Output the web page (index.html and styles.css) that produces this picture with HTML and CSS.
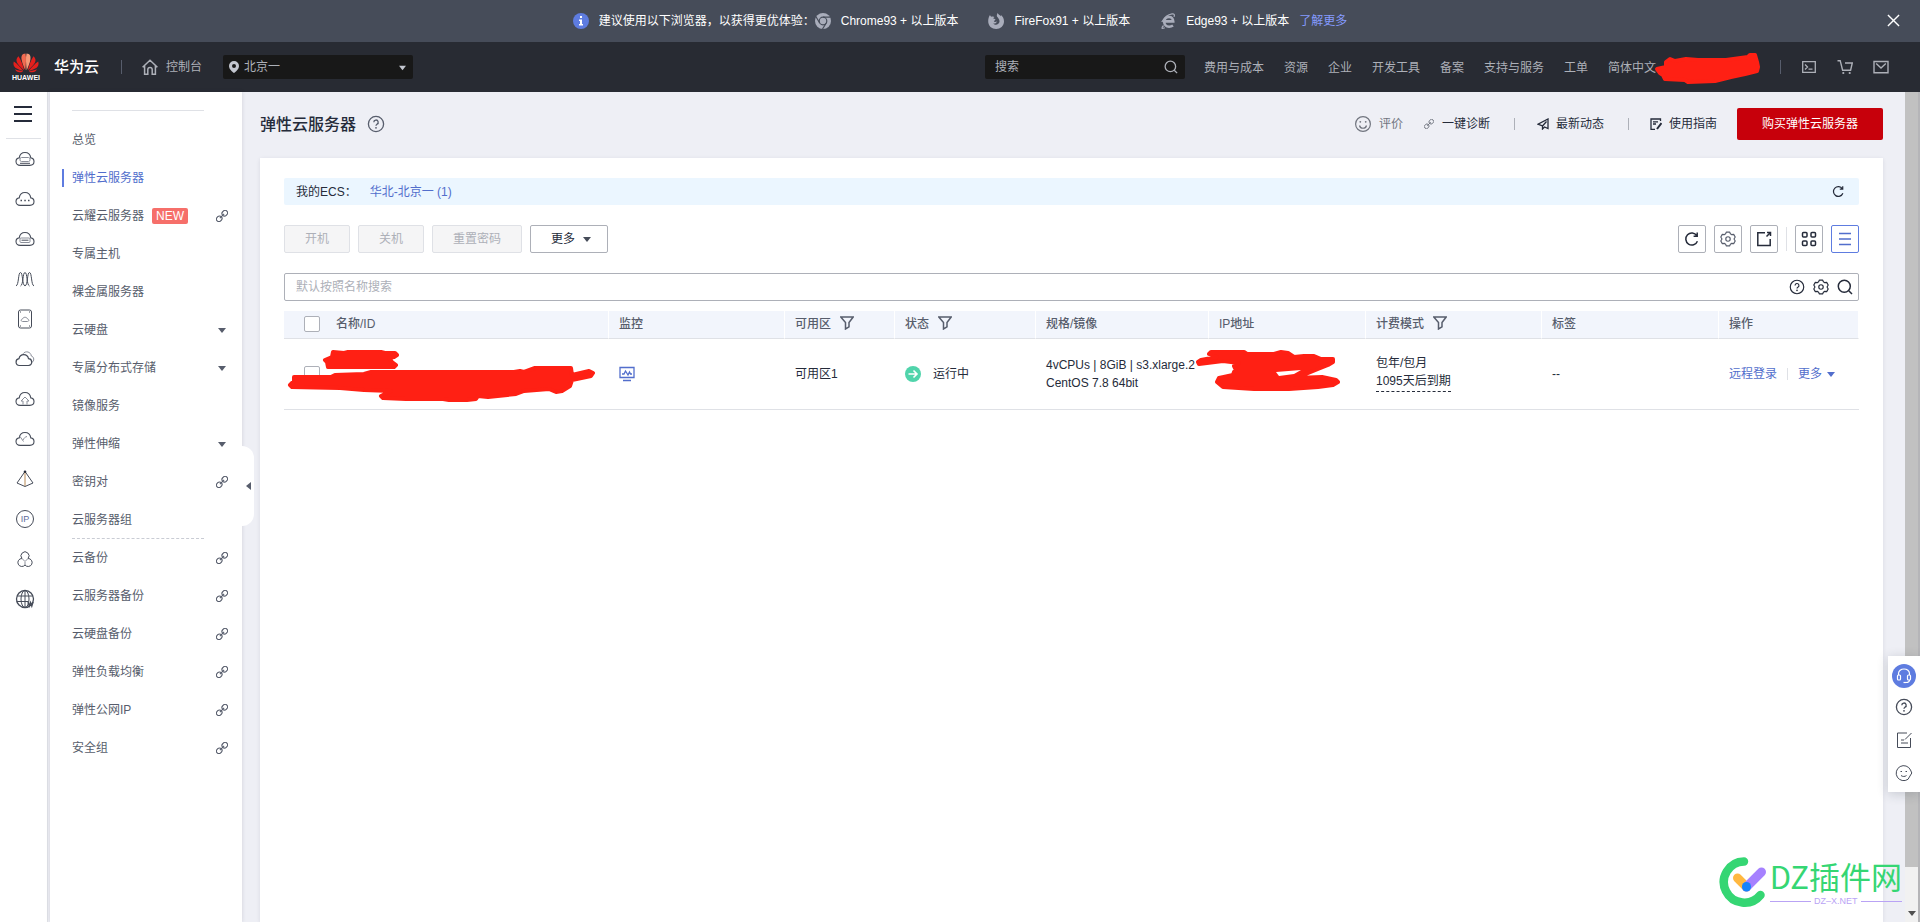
FILE: index.html
```html
<!DOCTYPE html>
<html lang="zh-CN">
<head>
<meta charset="utf-8">
<title>弹性云服务器</title>
<link rel="stylesheet" href="styles.css">
</head>
<body>
<svg class="sprite" aria-hidden="true">
  <symbol id="link" viewBox="0 0 14 14"><g fill="none" stroke="currentColor" stroke-width="1.3" transform="rotate(-45 7 7)"><rect x="-1" y="4.1" width="6.8" height="5.8" rx="2.9"/><rect x="8.2" y="4.1" width="6.8" height="5.8" rx="2.9"/><path d="M3.5 7h7"/></g></symbol>
  <symbol id="caret" viewBox="0 0 8 5"><path fill="currentColor" d="M0 0h8L4 5z"/></symbol>
  <symbol id="help" viewBox="0 0 18 18"><g fill="none" stroke="currentColor" stroke-width="1.3"><circle cx="9" cy="9" r="7.6"/><path d="M6.8 7.2a2.2 2.2 0 1 1 3.2 2c-.7.4-1 .7-1 1.5"/></g><circle cx="9" cy="12.8" r=".9" fill="currentColor"/></symbol>
  <symbol id="refresh" viewBox="0 0 16 16"><path fill="none" stroke="currentColor" stroke-width="1.5" d="M13.4 10.2a6 6 0 1 1-.6-5.5M13.2 1.6v3.6H9.6"/></symbol>
  <symbol id="gear" viewBox="0 0 18 18"><g fill="none" stroke="currentColor" stroke-width="1.3" stroke-linejoin="round"><path d="M7.2 1.2h3.6l.9 2 1.5.9 2.2-.3 1.7 3L15.800 9l1.300 2.200-1.700 3-2.200-.3-1.500.9-.9 2H7.200l-.9-2-1.500-.9-2.200.3-1.700-3L2.200 9 .9 6.800l1.700-3 2.200.3 1.500-.9z"/><circle cx="9" cy="9" r="2.500"/></g></symbol>
  <symbol id="search" viewBox="0 0 16 16"><path fill="none" stroke="currentColor" stroke-width="1.500" d="M12 12l3 3M7.300 1.300a6 6 0 1 0 0 12 6 6 0 0 0 0-12z"/></symbol>
  <symbol id="filter" viewBox="0 0 14 14"><path fill="none" stroke="currentColor" stroke-width="1.500" d="M.8 1h12.400L9 6.500v4.300L5.500 13V6.500z"/></symbol>
  <symbol id="smile" viewBox="0 0 18 18"><g fill="none" stroke="currentColor" stroke-width="1.200"><circle cx="9" cy="9" r="7.400"/><path d="M5.500 10.500a3.600 3.600 0 0 0 7 0"/></g><circle cx="6.300" cy="6.800" r=".9" fill="currentColor"/><circle cx="11.700" cy="6.800" r=".9" fill="currentColor"/></symbol>
  <symbol id="cloud" viewBox="0 0 20 16"><path fill="none" stroke="currentColor" stroke-width="1.100" d="M5.200 14.400C2.800 14.400 1 12.900 1 10.600c0-2 1.300-3.400 3.200-3.700C4.700 3.700 7 1.500 10 1.500s5.300 2.200 5.800 5.400c1.900.3 3.200 1.700 3.200 3.700 0 2.300-1.800 3.800-4.200 3.800z"/></symbol>
</svg>

<div class="app">
  <div class="banner">
    <svg class="i16" viewBox="0 0 16 16"><circle cx="8" cy="8" r="8" fill="#5e7ce0"/><path d="M7 3h2v2H7zM6 6.500h3V11h1v1.500H6V11h1V8H6z" fill="#fff"/></svg>
    <span class="banner-lead">建议使用以下浏览器，以获得更优体验：</span>
    <svg class="i16" viewBox="0 0 16 16"><circle cx="8" cy="8" r="8" fill="#a9adbb"/><circle cx="8" cy="8" r="3.800" fill="#a9adbb" stroke="#464c59" stroke-width="1.200"/><path d="M8 4.200h7.500M4.700 10L1 3.800M11.300 10L7.500 16" stroke="#464c59" stroke-width="1.200"/></svg>
    <span class="browser">Chrome93 + 以上版本</span>
    <svg class="i16" viewBox="0 0 16 16"><path fill="#a9adbb" d="M2 2c.4 1 .9 1.500 1.700 1.800 1-.5 2-.3 2.800.2C5.500 4.500 5.400 5 5.500 5.800c1 .1 1.800.3 2 .8-.3.900-1.500 1-1.700 2 1 .8 2.200.3 3.200 0-.5 1.700-2.300 2.400-3.800 1.800C7 12.500 11 12 11.500 8.500 11.700 6 10 5 9 3.500c-.4-1 0-2.500.8-3.500C10 1.500 12 2 13 3.200c0-.5 0-.8-.3-1.400C15 3.500 16 6 16 8.500 16 13 12.300 16 8.200 16 4 16 0 13 .2 8 .3 5.500.8 3.500 2 2z"/></svg>
    <span class="browser">FireFox91 + 以上版本</span>
    <svg class="i16" viewBox="0 0 16 16"><g fill="none" stroke="#a9adbb"><path stroke-width="2.600" d="M5 8.400h8.200C13 5.500 11.300 4 9 4 6.300 4 4.200 6 4.200 8.800c0 2.900 2 4.900 4.900 4.900 1.400 0 2.800-.4 3.900-1.200"/><path stroke-width="1.200" d="M3.500 12.500C1 15.600 1.500 16 4.800 14.800M1.800 9C4 5 8 1.500 12 .9c2.400-.3 2.800 1 2 3"/></g></svg>
    <span class="browser last">Edge93 + 以上版本</span>
    <a class="banner-more" href="#">了解更多</a>
    <button class="banner-close" aria-label="关闭"><svg viewBox="0 0 14 14"><path d="M1 1l12 12M13 1L1 13" stroke="#fff" stroke-width="1.500"/></svg></button>
  </div>

  <header class="topbar">
    <a class="brand" href="#">
      <span class="mark">
        <svg viewBox="0 0 26 20"><g fill="#e2201d"><path fill="#f26a50" d="M12.500.5C9 .8 8 3 8.600 6.500c.6 3.800 2.500 8 3.700 10.700C12.800 12 13.500 5 12.500.5z"/><path fill="#f79a78" d="M13.500.5C17 .8 18 3 17.400 6.500c-.6 3.800-2.500 8-3.700 10.700-.5-5.200-1.200-12.200-.2-16.700z"/><path d="M5.500 3.200C3 5.500 3 8 4.600 10.500c1.800 2.700 4.600 5.200 6.600 6.800C10 12.500 8 6.500 5.500 3.200zM20.500 3.200C23 5.500 23 8 21.400 10.500c-1.800 2.700-4.600 5.200-6.600 6.800C16 12.500 18 6.500 20.500 3.200zM.8 8.500C-.2 12 1 14.200 3.800 15.600c2 1 4.400 1.900 6.500 2.300C7.500 14.500 4 10.500.8 8.500zM25.200 8.500c1 3.500-.2 5.700-3 7.100-2 1-4.400 1.900-6.500 2.300 2.800-3.400 6.300-7.400 9.500-9.400zM2 16.300c1.500 2.800 4 4 8.300 2.200C7.500 17.900 4.500 17.300 2 16.300zM24 16.300c-1.500 2.800-4 4-8.300 2.200 2.800-.6 5.800-1.200 8.300-2.200z"/></g></svg>
        <b>HUAWEI</b>
      </span>
      <span class="brand-name">华为云</span>
    </a>
    <i class="bar"></i>
    <a class="console" href="#"><svg viewBox="0 0 16 16"><path fill="none" stroke="currentColor" stroke-width="1.500" d="M.6 8.300L8 1.200l7.400 7.100M2.600 6.600v8.600h3.200v-4.600a2.200 2.200 0 0 1 4.400 0v4.600h3.200V6.600"/></svg>控制台</a>
    <div class="region">
      <svg class="pin" viewBox="0 0 10 12"><path fill="#c3c6cf" fill-rule="evenodd" d="M5 0a5 5 0 0 1 5 5c0 3-3 5.500-5 7-2-1.500-5-4-5-7a5 5 0 0 1 5-5zm0 3a2 2 0 1 0 0 4 2 2 0 0 0 0-4z"/></svg>
      <select aria-label="区域"><option>北京一</option></select>
      <svg class="down"><use href="#caret"/></svg>
    </div>
    <div class="spacer"></div>
    <div class="top-search"><input type="text" placeholder="搜索" aria-label="搜索"><svg><use href="#search"/></svg></div>
    <nav class="topnav">
      <a href="#">费用与成本</a><a href="#">资源</a><a href="#">企业</a><a href="#">开发工具</a><a href="#">备案</a><a href="#">支持与服务</a><a href="#">工单</a><a href="#">简体中文</a>
    </nav>
    <svg class="user-mask" viewBox="0 0 105 32"><path class="mask" d="M1 18L10 16 10 11 14 8 19 10 30 8 42 9 70 9 92 6 94 4 99 4 101 11 102 16 101 20 89 23 75 26 59 30 32 31 29 29 9 28 7 24 4 22z"/></svg>
    <i class="bar"></i>
    <div class="top-icons">
      <button aria-label="终端"><svg viewBox="0 0 16 16"><path fill="none" stroke="currentColor" stroke-width="1.300" d="M1.700 2.700h12.600v10.600H1.700zM4 5.500L6.500 8 4 10.500M7.500 10.200h4"/></svg></button>
      <button aria-label="购物车"><svg viewBox="0 0 16 16"><path fill="none" stroke="currentColor" stroke-width="1.400" d="M.5 1.700h2.700l2.400 9.500h8L15.300 4H8"/><circle cx="6.300" cy="14" r="1.100" fill="currentColor"/><circle cx="12.700" cy="14" r="1.100" fill="currentColor"/></svg></button>
      <button aria-label="消息"><svg viewBox="0 0 16 16"><path fill="none" stroke="currentColor" stroke-width="1.400" d="M1 2.500h14v11.200H1zM3.200 4.500L8 9l4.800-4.500"/></svg></button>
    </div>
  </header>

  <div class="body">
    <nav class="rail" aria-label="服务">
      <button class="menu" aria-label="菜单"><i></i><i></i><i></i></button>
      <div class="rail-list">
        <a href="#"><svg viewBox="0 0 20 20"><use href="#cloud" y="2" width="20" height="16"/><rect x="5" y="8.500" width="10" height="4" rx="1.500" fill="none" stroke="#8a8e99"/><path d="M5 14.300h10" stroke="currentColor"/></svg></a>
        <a href="#"><svg viewBox="0 0 20 20"><use href="#cloud" y="2" width="20" height="16"/><path d="M5.500 11.500h1.500M9.300 11.500h1.500M13 11.500h1.500" stroke="currentColor" stroke-width="1.500"/></svg></a>
        <a href="#"><svg viewBox="0 0 20 20"><use href="#cloud" y="2" width="20" height="16"/><rect x="5" y="9" width="10" height="4.500" rx="1" fill="none" stroke="#8a8e99"/><path d="M6.500 11.200h7" stroke="currentColor"/></svg></a>
        <a href="#"><svg viewBox="0 0 20 20"><path fill="none" stroke="currentColor" d="M1 17C4 16 3 3.500 5.500 3.500S7 16 10 17M5.500 17C8.500 16 7.500 3.500 10 3.500S11.500 16 14.500 17M10 17c3-1 2-13.500 4.500-13.500S16 16 19 17"/></svg></a>
        <a href="#"><svg viewBox="0 0 20 20"><rect x="3.500" y="1" width="13" height="18" rx="2" fill="none" stroke="currentColor"/><path fill="none" stroke="#8a8e99" d="M7.500 12.500c-2-.2-1.500-2.500 0-2.500.5-2.300 4.500-2.300 5 0 1.500 0 2 2.300 0 2.500z"/><path d="M5 3h1M14 3h1M5 17h1M14 17h1" stroke="currentColor"/></svg></a>
        <a href="#"><svg viewBox="0 0 20 20"><path fill="none" stroke="#8a8e99" d="M8 4.800c2.500-3.500 8-2 8.300 2.200 3 .8 3.300 5 .5 6.500"/><path fill="none" stroke="currentColor" stroke-width="1.200" d="M4.500 16.500c-4.500-.3-4.500-6.200-.5-6.800 1-5.500 8.500-5.500 9.500 0 4 .3 4.500 6.200 0 6.800z"/></svg></a>
        <a href="#"><svg viewBox="0 0 20 20"><use href="#cloud" y="2" width="20" height="16"/><path fill="none" stroke="#8a8e99" d="M8 15.500v-3.500H6l4-4 4 4h-2v3.500"/></svg></a>
        <a href="#"><svg viewBox="0 0 20 20"><use href="#cloud" y="2" width="20" height="16"/><path fill="none" stroke="#8a8e99" d="M5 7.500l3.500 5M8 11c1-2 2-3 4-3.500"/></svg></a>
        <a href="#"><svg viewBox="0 0 20 20"><path fill="none" stroke="currentColor" d="M10 2.500L2 14l8 3.500L18 14z"/><path d="M10 3v14" stroke="#b98a55"/><circle cx="10" cy="2.800" r="1.300" fill="#252b3a"/></svg></a>
        <a href="#"><svg viewBox="0 0 20 20"><circle cx="10" cy="10" r="8.500" fill="none" stroke="currentColor"/><text x="10" y="13" text-anchor="middle" font-size="9" fill="#5e6a9a">IP</text></svg></a>
        <a href="#"><svg viewBox="0 0 20 20"><g fill="none" stroke="currentColor"><path d="M7 9.500a4 4 0 1 1 6 0 4 4 0 1 1-3 6.500 4 4 0 1 1-3-6.500z"/><path d="M10 16v-3M7 9.500l3 3 3-3" stroke="#8a8e99"/></g></svg></a>
        <a href="#"><svg viewBox="0 0 20 20"><g fill="none" stroke="currentColor"><circle cx="10" cy="10" r="8.500" stroke-width="1.300"/><ellipse cx="10" cy="10" rx="4" ry="8.500"/><path d="M2 7h16M1.500 12.500h12M10 1.500v17"/><path d="M13 13l1.200 4 1.300-3.500 1.300 3.500L18 13" stroke-width="1.400"/></g></svg></a>
      </div>
    </nav>

    <aside class="sidebar">
      <ul>
        <li><a href="#">总览</a></li>
        <li class="active"><a href="#">弹性云服务器</a></li>
        <li><a href="#">云耀云服务器</a><em>NEW</em><svg class="ext"><use href="#link"/></svg></li>
        <li><a href="#">专属主机</a></li>
        <li><a href="#">裸金属服务器</a></li>
        <li><a href="#">云硬盘</a><svg class="fold"><use href="#caret"/></svg></li>
        <li><a href="#">专属分布式存储</a><svg class="fold"><use href="#caret"/></svg></li>
        <li><a href="#">镜像服务</a></li>
        <li><a href="#">弹性伸缩</a><svg class="fold"><use href="#caret"/></svg></li>
        <li><a href="#">密钥对</a><svg class="ext"><use href="#link"/></svg></li>
        <li class="split"><a href="#">云服务器组</a></li>
        <li><a href="#">云备份</a><svg class="ext"><use href="#link"/></svg></li>
        <li><a href="#">云服务器备份</a><svg class="ext"><use href="#link"/></svg></li>
        <li><a href="#">云硬盘备份</a><svg class="ext"><use href="#link"/></svg></li>
        <li><a href="#">弹性负载均衡</a><svg class="ext"><use href="#link"/></svg></li>
        <li><a href="#">弹性公网IP</a><svg class="ext"><use href="#link"/></svg></li>
        <li><a href="#">安全组</a><svg class="ext"><use href="#link"/></svg></li>
      </ul>
      <button class="collapse" aria-label="收起"></button>
    </aside>

    <main>
      <div class="page-head">
        <h1>弹性云服务器</h1>
        <svg class="head-help"><use href="#help"/></svg>
        <div class="spacer"></div>
        <a class="rate" href="#"><svg class="i18"><use href="#smile"/></svg>评价</a>
        <a class="diag" href="#"><svg class="i10"><use href="#link"/></svg>一键诊断</a>
        <i class="bar"></i>
        <a class="news" href="#"><svg class="i12" viewBox="0 0 12 12"><path fill="none" stroke="currentColor" stroke-width="1.300" d="M11 1v9.500L7.500 9 5.500 11V8L1 6.200zM5.500 8L9.500 3.500"/></svg>最新动态</a>
        <i class="bar"></i>
        <a class="guide" href="#"><svg class="i12" viewBox="0 0 12 12"><path fill="none" stroke="currentColor" stroke-width="1.300" d="M10.500 3V1H1v10.300h4M3 3.800h5M3 6h3"/><path stroke="currentColor" stroke-width="2" d="M11.500 5L7 11"/></svg>使用指南</a>
        <button class="buy">购买弹性云服务器</button>
      </div>

      <section class="card">
        <div class="notice"><span>我的ECS：</span><a href="#">华北-北京一 (1)</a><button aria-label="刷新"><svg><use href="#refresh"/></svg></button></div>

        <div class="tools">
          <button disabled>开机</button>
          <button disabled>关机</button>
          <button disabled>重置密码</button>
          <button class="more">更多<svg><use href="#caret"/></svg></button>
          <div class="spacer"></div>
          <button class="sq" aria-label="刷新"><svg><use href="#refresh"/></svg></button>
          <button class="sq soft" aria-label="设置"><svg><use href="#gear"/></svg></button>
          <button class="sq" aria-label="导出"><svg viewBox="0 0 16 16"><path fill="none" stroke="currentColor" stroke-width="1.500" d="M9 1.800H1.800v12.700h12.400V8M10.500 5.500l3.500-3.500M11 1.500h3.500V5"/></svg></button>
          <i class="bar"></i>
          <button class="sq" aria-label="卡片视图"><svg viewBox="0 0 16 16"><g fill="none" stroke="currentColor" stroke-width="1.500"><rect x="1.500" y="1.500" width="4.500" height="4.500" rx="1"/><rect x="10" y="1.500" width="4.500" height="4.500" rx="1"/><rect x="1.500" y="10" width="4.500" height="4.500" rx="1"/><rect x="10" y="10" width="4.500" height="4.500" rx="1"/></g></svg></button>
          <button class="sq on" aria-label="列表视图"><svg viewBox="0 0 16 16"><path stroke="currentColor" stroke-width="1.300" d="M2 2.500h12M2 8h12M2 13.500h12"/></svg></button>
        </div>

        <div class="query">
          <input type="text" placeholder="默认按照名称搜索" aria-label="默认按照名称搜索">
          <svg><use href="#help"/></svg><svg><use href="#gear"/></svg><svg><use href="#search"/></svg>
        </div>

        <table>
          <colgroup><col class="c-name"><col class="c-mon"><col class="c-az"><col class="c-state"><col class="c-spec"><col class="c-ip"><col class="c-bill"><col class="c-tag"><col class="c-op"></colgroup>
          <thead><tr>
            <th class="name"><label><input type="checkbox">名称/ID</label></th>
            <th>监控</th>
            <th>可用区<svg class="funnel"><use href="#filter"/></svg></th>
            <th>状态<svg class="funnel"><use href="#filter"/></svg></th>
            <th>规格/镜像</th>
            <th>IP地址</th>
            <th>计费模式<svg class="funnel"><use href="#filter"/></svg></th>
            <th>标签</th>
            <th>操作</th>
          </tr></thead>
          <tbody><tr>
            <td class="name"><input type="checkbox" aria-label="选择"><svg class="over" viewBox="0 0 324 72" preserveAspectRatio="xMinYMin"><path class="mask" d="M49 13L60 14 64 13 97 13 101 14 111 14 113 16 110 18 105 19 108 23 112 26 110 28 44 28 43 23 41 21 48 18zM10 38L47 38 51 36 80 35 87 33 230 33 236 32 240 33 251 29 287 29 288 36 305 32 309 34 307 37 288 41 286 47 278 52 272 53 265 50 240 52 232 55 204 58 194 57 192 60 183 61 165 61 159 60 122 60 99 59 97 57 107 52 80 51 56 49 8 48 6 46 10 42z"/></svg></td>
            <td><svg class="monitor" viewBox="0 0 16 16"><path fill="none" stroke="#526ecc" stroke-width="1.300" d="M1 1.500h14v10H1zM4 14.500h8M3 8h2l1.500-3L9 9l1.500-3 1 2H13"/></svg></td>
            <td>可用区1</td>
            <td><span class="state"><svg class="i16" viewBox="0 0 16 16"><circle cx="8" cy="8" r="8" fill="#50d4ab"/><path fill="none" stroke="#fff" stroke-width="1.600" d="M3.500 8h8.500M8.500 4.500L12 8l-3.500 3.500"/></svg>运行中</span></td>
            <td class="nowrap">4vCPUs | 8GiB | s3.xlarge.2<br>CentOS 7.8 64bit</td>
            <td class="ip"><svg class="over" viewBox="0 0 157 72" preserveAspectRatio="xMinYMin"><path class="mask" d="M-11 23L-8 21 8 18 0 15 2 13 35 13 38 15 65 15 72 13 79 14 85 18 95 17 105 17 112 20 124 20 124 23 119 26 109 30 87 39 113 38 127 41 129 43 124 46 109 48 80 50 45 50 14 48 8 43 10 39 24 36 25 33 27 31 25 27 30 24 14 22-10 25z"/><path fill="#fff" d="M67 33L92 31 85 35 70 37z"/></svg></td>
            <td class="bill">包年/包月<br><span>1095天后到期</span></td>
            <td>--</td>
            <td><span class="ops"><a href="#">远程登录</a><i class="bar"></i><a href="#">更多<svg><use href="#caret"/></svg></a></span></td>
          </tr></tbody>
        </table>
      </section>
    </main>
    <div class="scroll" aria-hidden="true"><i></i><svg><use href="#caret"/></svg></div>
  </div>

  <div class="float">
    <button class="agent" aria-label="客服"><svg viewBox="0 0 24 24"><circle cx="12" cy="12" r="12" fill="#5e7ce0"/><g fill="none" stroke="#fff" stroke-width="1.200"><path d="M6.500 11V9.500a5.500 4.500 0 0 1 11 0V11M17.500 16c0 2-1.500 2.500-3.500 2.500"/><rect x="5.500" y="11" width="3" height="5" rx="1"/><rect x="15.500" y="11" width="3" height="5" rx="1"/><path d="M11.500 18.500h2.500"/></g></svg></button>
    <button aria-label="帮助"><svg><use href="#help"/></svg></button>
    <button aria-label="反馈"><svg viewBox="0 0 18 18"><path fill="none" stroke="currentColor" d="M12 2H2.500v14.500h13V7M6 9h3M6 12h7M10 8.500L16.500 2"/></svg></button>
    <button aria-label="评价"><svg viewBox="0 0 18 18"><path fill="none" stroke="currentColor" d="M15.500 6A7.500 7.500 0 1 0 13 15.300L16.800 9 15.500 6M6 11.500c1.500 1.300 4 1.300 5.500 0M5.500 7.500H7M10.500 7.500H12"/></svg></button>
  </div>

  <div class="stamp">
    <svg viewBox="0 0 48 50"><g fill="none" stroke-linecap="round"><path stroke="#35d673" stroke-width="8.500" d="M25 4.500A20.600 20.600 0 1 0 41.500 38"/><path stroke="#ffb840" stroke-width="9" d="M18.500 21L27.500 30"/><path stroke="#a681ff" stroke-width="9" d="M27.500 30L42.500 15"/><path stroke="#1684fc" stroke-width="9" d="M27.500 29.500v.5"/></g></svg>
    <div><strong>DZ插件网</strong><small><i></i>DZ–X.NET<i></i></small></div>
  </div>
</div>
</body>
</html>
```

FILE: styles.css
```css
* { box-sizing: border-box; }
body {
  margin: 0;
  font: 12px/18px "Liberation Sans", "Noto Sans CJK SC", sans-serif;
  color: #252b3a;
  background: #eeeff5;
  overflow: hidden;
}
a { color: inherit; text-decoration: none; }
button, input, select { font: inherit; color: inherit; }
button { padding: 0; border: 0; background: none; display: flex; align-items: center; justify-content: center; white-space: nowrap; }
svg { display: block; flex: none; }
.sprite { position: absolute; width: 0; height: 0; }
.spacer { flex: 1; }
.i10 { width: 10px; height: 10px; }
.i12 { width: 12px; height: 12px; }
.i16 { width: 16px; height: 16px; }
.i18 { width: 18px; height: 18px; }
.bar { flex: none; width: 1px; height: 12px; background: #adb0b8; }
.mask { fill: #ff2014; stroke: #ff2014; stroke-width: 4; stroke-linejoin: round; }

.app { display: flex; flex-direction: column; height: 100vh; position: relative; }

/* browser notice */
.banner { position: relative; display: flex; align-items: center; justify-content: center; height: 42px; padding-bottom: 1px; background: #464c59; color: #fff; white-space: nowrap; }
.banner-lead { margin-left: 10px; }
.browser { margin: 0 30px 0 10px; }
.browser.last { margin-right: 10px; }
.banner-more { color: #859bff; }
.banner-close { position: absolute; right: 20px; top: 14px; }
.banner-close svg { width: 13px; height: 13px; }

/* top bar */
.topbar { display: flex; align-items: center; height: 50px; padding: 0 31px 0 12px; background: #282b33; color: #adb0b8; white-space: nowrap; }
.brand { display: flex; align-items: center; }
.mark { display: flex; flex-direction: column; align-items: center; width: 28px; padding-top: 1px; }
.mark svg { width: 26px; height: 20px; }
.mark b { font-size: 7px; line-height: 9px; color: #fff; }
.brand-name { margin-left: 14px; font-size: 15px; font-weight: 500; color: #fff; }
.topbar .bar { height: 14px; margin-left: 22px; background: #575d6c; }
.console { display: flex; align-items: center; gap: 8px; margin-left: 20px; }
.console svg { width: 16px; height: 16px; }
.region { position: relative; display: flex; align-items: center; width: 190px; height: 24px; margin-left: 21px; background: #181818; border-radius: 2px; }
.region select { appearance: none; width: 100%; height: 24px; padding: 0 20px 0 21px; border: 0; background: transparent; }
.pin { position: absolute; left: 6px; top: 6px; width: 10px; height: 12px; }
.down { position: absolute; right: 7px; top: 10px; width: 7px; height: 6px; color: #c3c6cf; }
.top-search { display: flex; align-items: center; width: 200px; height: 24px; padding: 0 7px 0 10px; background: #181818; border-radius: 2px; }
.top-search input { flex: 1; min-width: 0; padding: 0; border: 0; background: none; }
.top-search input::placeholder { color: #adb0b8; }
.top-search svg { width: 14px; height: 14px; }
.topnav { display: flex; gap: 20px; margin-left: 19px; padding-top: 2px; }
.user-mask { width: 105px; height: 32px; overflow: visible; }
.topbar .user-mask + .bar { margin-left: 19px; }
.top-icons { display: flex; gap: 20px; margin-left: 20px; }
.top-icons svg { width: 16px; height: 16px; }

/* icon rail */
.body { flex: 1; min-height: 0; display: flex; }
.rail { width: 48px; flex: none; background: #fff; border-right: 1px solid #dfe1e6; }
.menu { flex-direction: column; justify-content: space-between; width: 18px; height: 16px; margin: 14px 0 16px 14px; }
.menu i { width: 18px; height: 2px; background: #252b3a; }
.rail-list { display: flex; flex-direction: column; margin: 0 6px; padding-left: 9px; border-top: 1px solid #dfe1e6; color: #464c59; }
.rail-list a { height: 40px; display: flex; align-items: center; }
.rail-list svg { width: 20px; height: 20px; }

/* service menu */
.sidebar { position: relative; width: 192px; flex: none; margin-left: 2px; padding: 18px 0 0 22px; background: #fff; box-shadow: 0 0 4px rgba(37, 43, 58, .15); color: #575d6c; }
.sidebar ul { list-style: none; margin: 0; padding: 11px 0 0; position: relative; }
.sidebar ul::before { content: ""; position: absolute; top: 0; left: 0; width: 132px; height: 1px; background: #dfe1e6; }
.sidebar li { position: relative; display: flex; align-items: center; height: 38px; padding-right: 14px; }
.sidebar li.active { color: #526ecc; }
.sidebar li.active::before { content: ""; position: absolute; left: -10px; top: 10px; width: 2px; height: 18px; background: #5e7ce0; }
.sidebar li.split::after { content: ""; position: absolute; left: 0; bottom: 0; width: 132px; border-bottom: 1px dashed #c9ccd4; }
.sidebar em { margin-left: 8px; padding: 0 4px; font-style: normal; line-height: 16px; color: #fff; background: #f66f6a; border-radius: 2px; }
.ext { width: 12px; height: 12px; margin-left: auto; overflow: visible; }
.fold { width: 8px; height: 5px; margin: 0 2px 0 auto; }
.collapse { position: absolute; left: 100%; top: 354px; width: 12px; height: 80px; background: #fff; border-radius: 0 12px 12px 0; }
.collapse::before { content: ""; border: 4px solid transparent; border-left: 0; border-right: 5px solid #575d6c; }

/* content */
main { flex: 1; min-width: 0; display: flex; flex-direction: column; padding: 16px 22px 0 18px; }
.page-head { display: flex; align-items: center; height: 32px; white-space: nowrap; }
.page-head a { display: flex; align-items: center; }
h1 { margin: 0; padding-top: 2px; font-size: 16px; line-height: 24px; font-weight: 500; }
.head-help { width: 18px; height: 18px; margin-left: 11px; color: #575d6c; }
.rate { gap: 7px; color: #71757f; }
.diag { gap: 8px; margin: 0 24px 0 21px; }
.diag svg { overflow: visible; color: #71757f; }
.news { gap: 7px; margin: 0 24px 0 22px; }
.guide { gap: 7px; margin: 0 20px 0 21px; }
.buy { height: 32px; padding: 0 25px; background: #c7000b; color: #fff; border-radius: 2px; }
.card { flex: 1; margin-top: 18px; padding: 20px 24px; background: #fff; box-shadow: 0 1px 4px rgba(37, 43, 58, .1); }
.notice { display: flex; align-items: center; height: 27px; padding: 0 14px 0 12px; background: #ebf6ff; border-radius: 2px; }
.notice a { margin-left: 13px; color: #526ecc; }
.notice button { margin-left: auto; }
.notice svg { width: 13px; height: 13px; }

.tools { display: flex; align-items: center; gap: 8px; margin: 20px 0; }
.tools button { height: 28px; padding: 0 20px; border: 1px solid #adb0b8; border-radius: 2px; background: #fff; }
.tools button:disabled { border-color: #dfe1e6; background: #f5f5f6; color: #adb0b8; }
.tools .more { gap: 8px; padding: 0 16px 0 20px; }
.more svg { width: 8px; height: 5px; color: #464c59; }
.tools .sq { width: 28px; padding: 0; }
.sq svg { width: 16px; height: 16px; }
.tools .soft { color: #575d6c; }
.tools .on { border-color: #5e7ce0; color: #526ecc; }
.tools .bar { height: 24px; background: #dfe1e6; }

.query { display: flex; align-items: center; gap: 8px; height: 28px; padding: 0 5px 0 11px; border: 1px solid #adb0b8; border-radius: 2px; }
.query input { flex: 1; min-width: 0; padding: 0; border: 0; outline: 0; background: none; }
.query input::placeholder { color: #adb0b8; }
.query svg { width: 16px; height: 16px; }

table { width: 100%; margin-top: 10px; table-layout: fixed; border-collapse: separate; border-spacing: 0; }
.c-name { width: 325px; }
.c-mon { width: 176px; }
.c-az { width: 110px; }
.c-state { width: 141px; }
.c-spec { width: 173px; }
.c-ip { width: 157px; }
.c-bill { width: 176px; }
.c-tag { width: 177px; }
.c-op { width: 140px; }
th { height: 28px; padding: 0 0 2px 10px; text-align: left; font-weight: 500; color: #575d6c; background: #f2f5fc; border-bottom: 1px solid #dfe1e6; border-right: 1px solid #fff; }
td { height: 71px; padding: 0 0 0 10px; border-bottom: 1px solid #dfe1e6; }
th.name, td.name { padding-left: 20px; }
td.name, td.ip { position: relative; }
th label { display: flex; align-items: center; gap: 16px; }
input[type="checkbox"] { appearance: none; display: block; width: 16px; height: 16px; margin: 0; border: 1px solid #adb0b8; border-radius: 2px; background: #fff; }
.funnel { display: inline-block; width: 14px; height: 14px; margin-left: 9px; vertical-align: -2px; }
.over { position: absolute; left: 0; top: 0; width: 100%; height: 72px; overflow: visible; }
.monitor { width: 16px; height: 16px; }
.state { display: flex; align-items: center; gap: 12px; }
.nowrap { white-space: nowrap; }
.bill span { display: inline-block; padding-bottom: 2px; border-bottom: 1px dashed #252b3a; line-height: 16px; }
td.bill { padding-bottom: 2px; }
.ops { display: flex; align-items: center; gap: 10px; color: #526ecc; }
.ops a { display: flex; align-items: center; gap: 5px; }
.ops svg { width: 8px; height: 5px; }
.ops .bar { background: #dfe1e6; }

/* scroll track */
.scroll { display: flex; flex-direction: column; align-items: center; justify-content: space-between; width: 15px; padding-bottom: 6px; background: #f1f1f1; border-right: 2px solid #b5b5b8; }
.scroll i { width: 100%; height: 94%; background: #c1c1c1; }
.scroll svg { width: 8px; height: 5px; color: #505050; }

/* floating helpers */
.float { position: absolute; right: 0; bottom: 130px; display: flex; flex-direction: column; align-items: center; gap: 15px; width: 32px; padding: 8px 0 10px; background: #fff; color: #464c59; box-shadow: 0 2px 12px rgba(37, 43, 58, .2); }
.float svg { width: 18px; height: 18px; }
.float .agent { margin-bottom: -5px; }
.float .agent svg { width: 24px; height: 24px; }

.stamp { position: absolute; right: 18px; bottom: 15px; display: flex; align-items: center; gap: 3px; color: #35d673; }
.stamp > svg { width: 48px; height: 50px; }
.stamp strong { display: block; font: 400 31px/38px "Noto Sans CJK SC", sans-serif; }
.stamp small { display: flex; align-items: center; gap: 3px; font-size: 9px; line-height: 12px; color: #b9a3f5; }
.stamp small i { flex: 1; height: 1px; background: #b9a3f5; }
```
